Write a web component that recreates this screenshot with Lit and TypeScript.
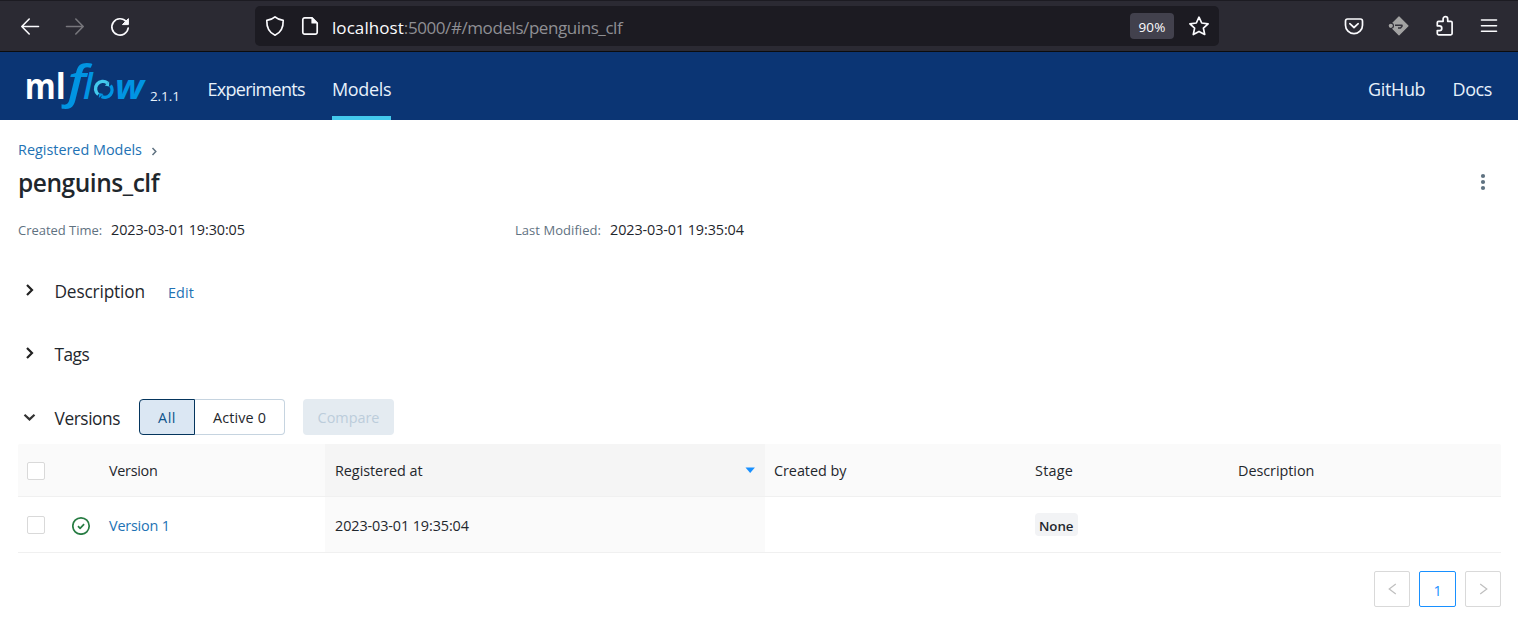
import { LitElement, html, css, svg } from "lit";
import { customElement } from "lit/decorators.js";

const icon = (body: unknown, size = 24) =>
  html`<svg width=${size} height=${size} viewBox="0 0 ${size} ${size}" fill="none" stroke="currentColor" stroke-width="1.7" stroke-linecap="round" stroke-linejoin="round">${body}</svg>`;

const shared = css`
  * { box-sizing: border-box; }
  svg { display: block; flex: none; }
`;

@customElement("browser-bar")
export class BrowserBar extends LitElement {
  static styles = [shared, css`
    :host { display: flex; align-items: center; height: 52px; background: #2b2a33; border-top: 1px solid #1c1b22; border-bottom: 1px solid #0c0c0d; color: #fbfbfe; padding: 0 6.5px 0 7.5px; }
    .btn { width: 45px; display: flex; justify-content: center; }
    .dim { color: #77767c; }
    .address { width: 964px; height: 40px; margin-left: 112.5px; margin-right: auto; background: #1c1b22; border-radius: 5px; display: flex; align-items: center; padding: 0 8px; }
    .page { margin-left: 11px; }
    .url { margin-left: 10px; padding-top: 3px; flex: 1; font-size: 17px; line-height: 20px; color: #8f8f94; letter-spacing: -0.42px; }
    .host { color: #fbfbfe; letter-spacing: 0.07px; }
    .zoom { width: 44px; height: 26px; margin-right: 13px; border-radius: 4px; background: #42414d; text-align: center; font-size: 13.5px; line-height: 28px; letter-spacing: 0.1px; }
  `];
  render() {
    return html`
      <div class="btn">${icon(svg`<path d="M20.500 12.500H4M11.200 5L3.800 12.500l7.400 7.500" stroke-width="1.600"/>`)}</div>
      <div class="btn dim">${icon(svg`<path d="M3.500 12.500H20M12.800 5l7.400 7.500-7.400 7.500" stroke-width="1.600"/>`)}</div>
      <div class="btn">${icon(svg`<path d="M18.300 7.600A8.200 8.200 0 1 0 20.200 14"/><path d="M20.400 5v5.600h-5.600z" fill="currentColor" stroke-width="1"/>`)}</div>
      <div class="address">
        ${icon(svg`<path d="M12 2.800C14.200 4.700 17 5.900 20.200 6.400C20.400 13 18.200 18.600 12 21.200C5.800 18.600 3.600 13 3.800 6.400C7 5.900 9.800 4.700 12 2.800z"/>`)}
        <div class="page">${icon(svg`<path d="M14 3.800H6.700A1.900 1.900 0 0 0 4.800 5.700V18.300A1.900 1.900 0 0 0 6.700 20.200H17.300A1.900 1.900 0 0 0 19.200 18.300V9z"/><path d="M14 4v5h5z" fill="currentColor" stroke-width="1.200"/>`)}</div>
        <div class="url"><span class="host">localhost</span>:5000/#/models/penguins_clf</div>
        <div class="zoom">90%</div>
        ${icon(svg`<path d="M12 3.200l2.700 5.800 6.400.8-4.700 4.300 1.300 6.400L12 17.400l-5.700 3.100 1.300-6.400L2.900 9.800l6.400-.8z"/>`)}
      </div>
      <div class="btn">${icon(svg`<path d="M5.600 5h12.800A2.200 2.200 0 0 1 20.500 7.200V11.200a8.500 8.500 0 0 1-17 0V7.200A2.200 2.200 0 0 1 5.600 5z"/><path d="M7.800 9.700L12 13.500l4.200-3.800"/>`)}</div>
      <div class="btn">${icon(svg`<path d="M12 2.800L21 11.800L12 20.800L5.500 14.300V9.300z" fill="#a3a3a3" stroke="#a3a3a3" stroke-width="1.200"/><circle cx="4" cy="11.800" r="3" fill="#2b2a33" stroke="none"/><circle cx="3.800" cy="11.800" r="2.100" fill="#a3a3a3" stroke="none"/><path d="M8 11.300h7v1l-1.500 1.700h-2.500" stroke="#35343d" stroke-width="1.500" stroke-linecap="butt"/>`)}</div>
      <div class="btn">${icon(svg`<path d="M5.300 11.800V8.600A1.300 1.300 0 0 1 6.600 7.300H11.100V5a2.300 2.300 0 0 1 4.600 0V7.300H18.800A1.300 1.300 0 0 1 20.100 8.600V19.600A1.300 1.300 0 0 1 18.800 20.900H6.600A1.300 1.300 0 0 1 5.300 19.600V16.600H7.400a2.400 2.400 0 0 0 0-4.800z"/>`)}</div>
      <div class="btn">${icon(svg`<path d="M4.500 6h15M4.500 11.700h15M4.500 17.300h15" stroke-width="1.600"/>`)}</div>
    `;
  }
}

@customElement("app-header")
export class AppHeader extends LitElement {
  static styles = [shared, css`
    :host { display: flex; height: 68px; background: #0b3574; padding: 0 26px 0 20px; color: #e7f1fb; font-size: 18px; line-height: 22px; }
    .logo-ml { font: 700 35px "Open Sans", sans-serif; fill: #fff; }
    .logo-f { font: italic 600 45px "Open Sans", sans-serif; fill: #0194e2; }
    .logo-l { font: italic 600 35.5px "Open Sans", sans-serif; fill: #0194e2; }
    .logo-w { font: italic 700 34.5px "Open Sans", sans-serif; fill: #0194e2; }
    .version { margin: 33px 0 0 0; width: 57.5px; font-size: 13.5px; letter-spacing: -0.1px; }
    .link { height: 68px; padding-top: 26px; }
    .exp { width: 97px; letter-spacing: -0.72px; margin-right: 27.5px; }
    .active { width: 59px; letter-spacing: -0.36px; border-bottom: 4px solid #43c9ed; }
    .github { margin-left: auto; width: 57px; letter-spacing: -0.36px; margin-right: 27.5px; }
    .docs { width: 39.5px; letter-spacing: -0.42px; }
  `];
  render() {
    return html`
      <svg width="130" height="68" viewBox="20 52 130 68">
        <text class="logo-ml" x="24.700" y="99" textLength="31" lengthAdjust="spacingAndGlyphs">m</text>
        <text class="logo-ml" x="55.700" y="99" textLength="10" lengthAdjust="spacingAndGlyphs">l</text>
        <text class="logo-f" x="67.500" y="98" textLength="18.500" lengthAdjust="spacingAndGlyphs">f</text>
        <text class="logo-l" x="83" y="99">l</text>
        <g fill="none" stroke-width="3.400">
          <path d="M98.300 94.500A7.300 7.300 0 0 1 107.500 83" stroke="#43c9ed"/>
          <path d="M110.500 85.500A7.300 7.300 0 0 1 101.500 96.500" stroke="#0194e2"/>
        </g>
        <path d="M109.200 81.500l-.2 5-4.200-1z" fill="#43c9ed"/>
        <path d="M98.800 98l.4-5 4.200 1z" fill="#0194e2"/>
        <text class="logo-w" x="115" y="98.800" textLength="29" lengthAdjust="spacingAndGlyphs">w</text>
      </svg>
      <div class="version">2.1.1</div>
      <div class="link exp">Experiments</div>
      <div class="link active">Models</div>
      <div class="link github">GitHub</div>
      <div class="link docs">Docs</div>
    `;
  }
}

@customElement("versions-table")
export class VersionsTable extends LitElement {
  static styles = [shared, css`
    :host { display: block; }
    .row { display: grid; grid-template-columns: 45px 37px 225px 440px 261px 203px 1fr; height: 56px; border-bottom: 1px solid #f0f0f0; }
    .head { height: 53px; background: #fafafa; border-radius: 2px 2px 0 0; }
    .cell { display: flex; align-items: center; padding: 1px 9px 0; }
    .row .cell { letter-spacing: -0.05px; }
    .sorted { background: #fafafa; padding-left: 10px; justify-content: space-between; }
    .head .sorted { background: #f5f5f5; }
    .box { width: 18px; height: 18px; border: 1px solid #d9d9d9; border-radius: 2px; background: #fff; }
    .row .pick { padding-top: 0; }
    .head .pick { padding-top: 2px; }
    .row .version { letter-spacing: -0.3px; }
    .row .stage { letter-spacing: 0.25px; }
    .row .link { color: #2272b4; letter-spacing: -0.2px; }
    .row .date { letter-spacing: -0.1px; }
    .head .cell:not(.pick), .link, .date { padding-top: 2px; }
    .arrow { margin-top: -2px; }
    .ok { color: #277c43; }
    .badge { width: 43px; height: 23px; margin-top: -2px; padding: 0 4px; border-radius: 4px; background: #f2f3f5; font-size: 13.3px; font-weight: 600; line-height: 26px; }
  `];
  render() {
    return html`
      <div class="row head">
        <div class="cell pick"><span class="box"></span></div>
        <div class="cell"></div>
        <div class="cell version">Version</div>
        <div class="cell sorted"><span>Registered at</span><svg class="arrow" width="11" height="7" viewBox="0 0 11 7"><path d="M.5 .5h9.400L5.200 6z" fill="#1890ff"/></svg></div>
        <div class="cell">Created by</div>
        <div class="cell stage">Stage</div>
        <div class="cell">Description</div>
      </div>
      <div class="row">
        <div class="cell pick"><span class="box"></span></div>
        <div class="cell ok">${icon(svg`<circle cx="9" cy="10" r="8.200"/><path d="M6 10.200l2.100 2.100 4-4.100" stroke-linecap="butt"/>`, 19)}</div>
        <div class="cell link">Version 1</div>
        <div class="cell sorted date">2023-03-01 19:35:04</div>
        <div class="cell"></div>
        <div class="cell"><span class="badge">None</span></div>
        <div class="cell"></div>
      </div>
    `;
  }
}

@customElement("app-root")
export class AppRoot extends LitElement {
  static styles = [shared, css`
    :host { display: block; width: 1518px; height: 618px; overflow: hidden; background: #fff; color: #1f272d; font: 14.4px/20px "Open Sans", "Noto Sans", sans-serif; white-space: nowrap; }
    .main { padding: 20px 17px 0 18px; }
    .crumbs { display: flex; align-items: center; height: 20px; color: #2272b4; }
    .crumbs svg { margin: 3px 0 0 9.500px; color: #5f7281; }
    .title-row { display: flex; align-items: center; justify-content: space-between; height: 33px; margin-top: 6px; }
    .title { margin: 0; font-size: 24.5px; line-height: 33px; font-weight: 600; letter-spacing: -0.46px; }
    .menu { margin: -2px 14px 0 0; }
    .meta { display: grid; grid-template-columns: 497px 1fr; height: 21px; margin-top: 20px; }
    .item { display: flex; gap: 8px; line-height: 21px; letter-spacing: -0.1px; }
    .label { color: #5f7281; font-size: 13px; line-height: 22px; width: 85px; letter-spacing: -0.03px; }
    .wide { width: 87px; letter-spacing: 0.05px; }
    .section { display: flex; align-items: center; height: 21px; margin-top: 41px; }
    .section svg { margin: -3px 17.5px 0 5px; }
    .heading { font-size: 17.3px; line-height: 21px; }
    .desc { width: 91.500px; letter-spacing: -0.17px; }
    .tags { margin-top: 42px; }
    .tags .heading { letter-spacing: -0.5px; }
    .edit { margin: 2px 0 0 22px; color: #2272b4; letter-spacing: 0.1px; }
    .versions { height: 36px; margin: 34px 0 9px; }
    .section.versions svg { margin-top: 0; }
    .versions .heading { width: 84.500px; padding-top: 3px; letter-spacing: -0.42px; }
    .seg { height: 36px; line-height: 36px; text-align: center; border: 1px solid #c6d4e0; }
    .all { width: 56px; background: #dbe7f3; border-color: #04355d; border-radius: 4px 0 0 4px; color: #0e538b; letter-spacing: 0.5px; }
    .live { width: 90px; border-left: 0; border-radius: 0 4px 4px 0; letter-spacing: 0.15px; }
    .compare { width: 91px; height: 36px; margin-left: 18px; border-radius: 4px; background: #e4ebf1; color: #bccddb; line-height: 38px; text-align: center; }
    .pager { display: flex; justify-content: flex-end; gap: 9px; margin-top: 18px; }
    .page { display: flex; align-items: center; justify-content: center; width: 36px; height: 36px; border: 1px solid #d9d9d9; border-radius: 2px; color: #bfbfbf; }
    .current { width: 37px; border-color: #1890ff; color: #1890ff; padding-top: 3px; }
  `];
  render() {
    const right = icon(svg`<path d="M4 2l5 5-5 5" stroke="#222" stroke-width="2.200" stroke-linecap="butt" stroke-linejoin="miter"/>`, 14);
    return html`
      <browser-bar></browser-bar>
      <app-header></app-header>
      <div class="main">
        <div class="crumbs">Registered Models<svg width="7" height="9" viewBox="0 0 7 9" fill="none" stroke="currentColor" stroke-width="1.500"><path d="M1.500 1l3.300 3.500L1.500 8"/></svg></div>
        <div class="title-row">
          <h1 class="title">penguins_clf</h1>
          <svg class="menu" width="8" height="18" viewBox="0 0 8 18" fill="#5f7281"><circle cx="4" cy="3" r="2.100"/><circle cx="4" cy="9" r="2.100"/><circle cx="4" cy="15" r="2.100"/></svg>
        </div>
        <div class="meta">
          <div class="item"><span class="label">Created Time:</span><span>2023-03-01 19:30:05</span></div>
          <div class="item"><span class="label wide">Last Modified:</span><span>2023-03-01 19:35:04</span></div>
        </div>
        <div class="section">${right}<span class="heading desc">Description</span><span class="edit">Edit</span></div>
        <div class="section tags">${right}<span class="heading">Tags</span></div>
        <div class="section versions">
          ${icon(svg`<path d="M1.500 4.700l5 4.700 5-4.700" stroke="#333" stroke-width="2.200" stroke-linecap="butt" stroke-linejoin="miter"/>`, 14)}
          <span class="heading">Versions</span>
          <div class="seg all">All</div><div class="seg live">Active 0</div>
          <div class="compare">Compare</div>
        </div>
        <versions-table></versions-table>
        <div class="pager">
          <div class="page"><svg width="9" height="12" viewBox="0 0 9 12" fill="none" stroke="currentColor" stroke-width="1.200"><path d="M7.800 1L1.200 6l6.600 5"/></svg></div>
          <div class="page current">1</div>
          <div class="page"><svg width="9" height="12" viewBox="0 0 9 12" fill="none" stroke="currentColor" stroke-width="1.200"><path d="M1.200 1l6.600 5-6.600 5"/></svg></div>
        </div>
      </div>
    `;
  }
}
